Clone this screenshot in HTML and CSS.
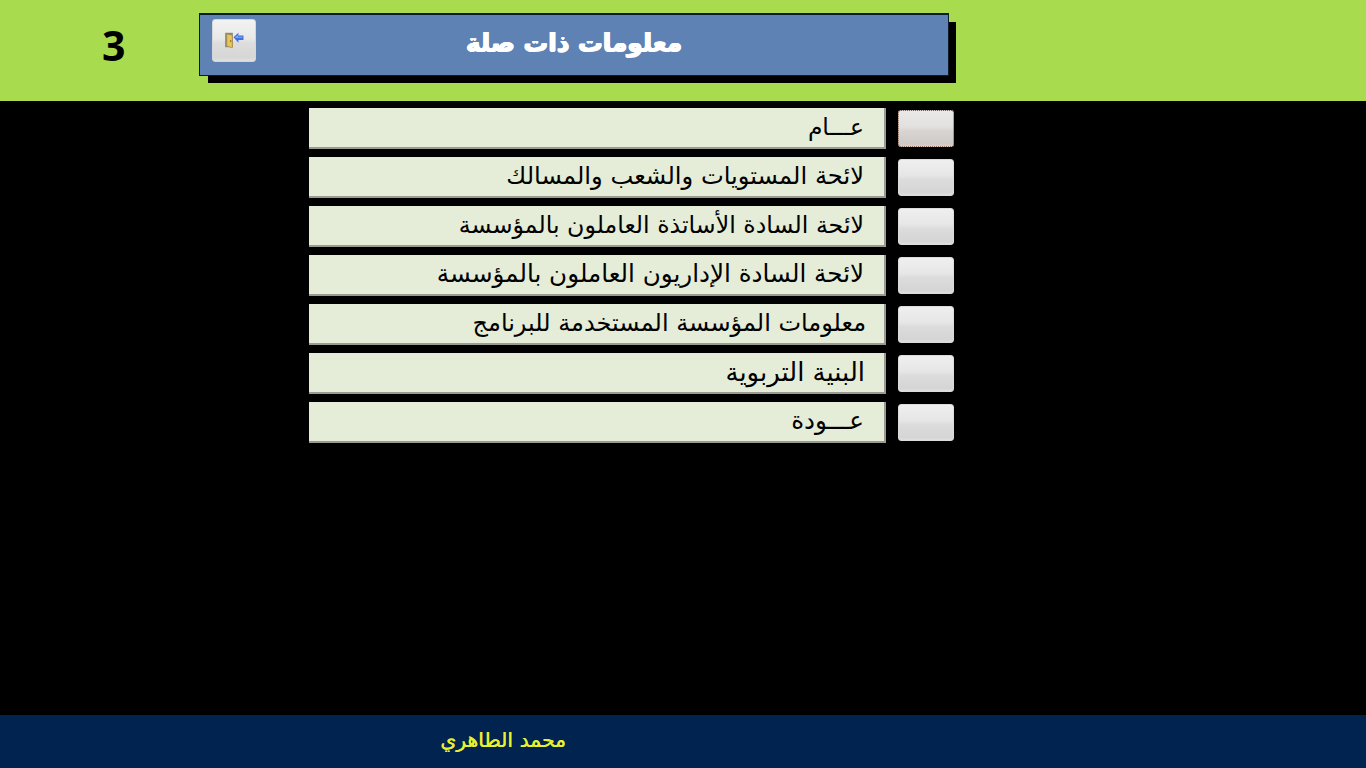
FILE: index.html
```html
<!DOCTYPE html>
<html lang="ar">
<head>
<meta charset="utf-8">
<title>معلومات ذات صلة</title>
<link rel="stylesheet" href="styles.css">
</head>
<body>
<div class="page">
  <header class="top">
    <div class="num">3</div>
    <div class="panel">
      <button class="exit" aria-label="exit">
        <svg width="20" height="18" viewBox="0 0 18 16">
          <path d="M1 1.500h7v13H1z" fill="#8a8a86"/>
          <path d="M2.500 2.500l5 1.200v11.300l-5-1.600z" fill="#e8c45c" stroke="#a98a35" stroke-width=".6"/>
          <circle cx="6" cy="9" r=".7" fill="#7a5c10"/>
          <path d="M8.500 5.500l4.500-4v2.500h4.500v4H13v2.500z" fill="#3f6fe0"/>
          <path d="M10 5.500l2.500-2v1.500h4v1H10z" fill="#8fb0f5"/>
        </svg>
      </button>
      <h1 class="title" dir="rtl">معلومات ذات صلة</h1>
    </div>
  </header>
  <main class="menu">
    <div class="row"><div class="label size-a" dir="rtl">عـــام</div><button class="btn focus"></button></div>
    <div class="row"><div class="label size-b" dir="rtl">لائحة المستويات والشعب والمسالك</div><button class="btn"></button></div>
    <div class="row"><div class="label size-c" dir="rtl">لائحة السادة الأساتذة العاملون بالمؤسسة</div><button class="btn"></button></div>
    <div class="row"><div class="label" dir="rtl">لائحة السادة الإداريون العاملون بالمؤسسة</div><button class="btn"></button></div>
    <div class="row"><div class="label size-d" dir="rtl">معلومات المؤسسة المستخدمة للبرنامج</div><button class="btn"></button></div>
    <div class="row"><div class="label size-e" dir="rtl">البنية التربوية</div><button class="btn"></button></div>
    <div class="row"><div class="label" dir="rtl">عـــودة</div><button class="btn"></button></div>
  </main>
  <footer class="bottom">
    <span class="author" dir="rtl">محمد الطاهري</span>
  </footer>
</div>
</body>
</html>
```
FILE: styles.css
```css
* { box-sizing: border-box; }
html, body { margin: 0; height: 100%; }
body { background: #000; font-family: "DejaVu Sans", "Noto Sans", sans-serif; overflow: hidden; }
.page { display: flex; flex-direction: column; height: 768px; }

.top { display: flex; align-items: flex-start; height: 101px; padding-top: 13px; background: #a9db4f; }
.num { width: 199px; padding-left: 102px; font: 700 41px/65px "Open Sans", sans-serif; color: #000; }
.panel { display: flex; align-items: flex-start; width: 750px; height: 63px; padding: 4px 0 0 12px; background: #5e82b4; border: 1px solid #0c1c2c; border-top-width: 2px; box-shadow: 8px 8px 0 -1px #000; }
.exit { display: flex; align-items: center; justify-content: center; width: 44px; height: 43px; padding: 0 0 1px; background: linear-gradient(#f2f2f2 0, #e8e8e8 46%, #dddddd 56%, #d6d6d6 90%, #e0e0e0 100%); border: 1px solid #d4d6da; border-radius: 3px; }
.title { flex: 1; margin: 4px 56px 0 0; text-align: center; font-size: 24.7px; font-weight: 700; line-height: 40px; color: #fff; text-shadow: .7px 0 0 #fff, -.7px 0 0 #fff, 0 .6px 0 #fff; }

.menu { flex: 1; display: flex; flex-direction: column; gap: 8px; padding: 7px 0 0 309px; }
.row { display: flex; align-items: center; gap: 12px; height: 41px; }
.label { width: 577px; height: 41px; padding-right: 20px; background: #e5edd8; border-right: 2px solid #9a9a92; border-bottom: 2px solid #9a9a92; font-size: 24.6px; line-height: 38px; color: #000; text-align: right; white-space: nowrap; }
.size-a { font-size: 23.4px; }
.size-b { font-size: 24.2px; }
.size-c { font-size: 23.7px; }
.size-d { font-size: 24px; padding-right: 18px; }
.size-e { font-size: 25.9px; padding-right: 19px; }
.btn { width: 56px; height: 37px; padding: 0; background: linear-gradient(#efefef 0, #e6e6e6 45%, #dcdcdc 56%, #d5d5d5 92%, #dedede 100%); border: 1px solid #dcdcdc; border-radius: 3px; }
.btn.focus { background: linear-gradient(#ebe9e8 0, #e3e1e0 45%, #d8d5d3 56%, #cfcac7 92%, #d6d1cd 100%); border: 1px dotted #7c5a44; }

.bottom { display: flex; justify-content: flex-end; align-items: center; height: 53px; padding-right: 800px; background: #00234f; }
.author { font-size: 20.4px; line-height: 50px; margin-top: -4px; color: #e8f02e; text-shadow: .3px 0 0 #e8f02e; }
```
